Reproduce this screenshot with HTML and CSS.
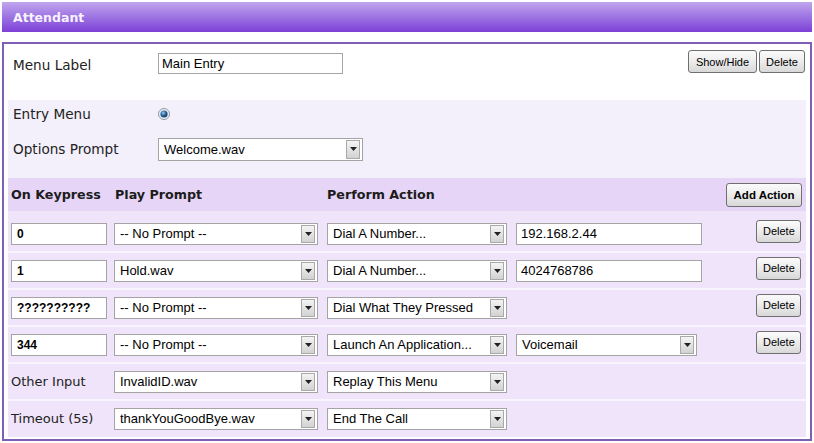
FILE: index.html
```html
<!DOCTYPE html>
<html>
<head>
<meta charset="utf-8">
<title>Attendant</title>
<link rel="stylesheet" href="styles.css">
</head>
<body>
<div class="panel-title">Attendant</div>
<div class="panel">
  <div class="label-row">
    <span class="field-label">Menu Label</span>
    <input class="text w-main" type="text" value="Main Entry">
    <div class="actions">
      <button class="btn btn-show">Show/Hide</button>
      <button class="btn btn-del">Delete</button>
    </div>
  </div>

  <div class="settings">
    <div class="setting entry">
      <span class="field-label">Entry Menu</span>
      <svg class="radio" width="12" height="12" viewBox="0 0 12 12">
        <defs>
          <radialGradient id="dot" cx="0.4" cy="0.35" r="0.7">
            <stop offset="0" stop-color="#9fd0f2"/>
            <stop offset="0.45" stop-color="#2f6ea5"/>
            <stop offset="1" stop-color="#0d2f55"/>
          </radialGradient>
        </defs>
        <circle cx="6" cy="6" r="5.5" fill="#eef1f4" stroke="#8d9aa7"/>
        <circle cx="6" cy="6" r="3.6" fill="url(#dot)"/>
      </svg>
    </div>
    <div class="setting prompt">
      <span class="field-label">Options Prompt</span>
      <span class="sel w-opt tall"><select><option>Welcome.wav</option></select><span class="arrow"><svg width="7" height="4" viewBox="0 0 7 4"><path d="M0 0H7L3.5 4Z" fill="#222"/></svg></span></span>
    </div>
  </div>

  <div class="keys">
    <div class="krow head">
      <span class="col-head">On Keypress</span>
      <span class="col-head">Play Prompt</span>
      <span class="col-head">Perform Action</span>
      <span></span>
      <button class="btn btn-add">Add Action</button>
    </div>

    <div class="krow first">
      <input class="text key w-key" type="text" value="0">
      <span class="sel w-prompt"><select><option>-- No Prompt --</option></select><span class="arrow"><svg width="7" height="4" viewBox="0 0 7 4"><path d="M0 0H7L3.5 4Z" fill="#222"/></svg></span></span>
      <span class="sel w-action"><select><option>Dial A Number...</option></select><span class="arrow"><svg width="7" height="4" viewBox="0 0 7 4"><path d="M0 0H7L3.5 4Z" fill="#222"/></svg></span></span>
      <input class="text w-value" type="text" value="192.168.2.44">
      <button class="btn btn-row">Delete</button>
    </div>

    <div class="krow">
      <input class="text key w-key" type="text" value="1">
      <span class="sel w-prompt"><select><option>Hold.wav</option></select><span class="arrow"><svg width="7" height="4" viewBox="0 0 7 4"><path d="M0 0H7L3.5 4Z" fill="#222"/></svg></span></span>
      <span class="sel w-action"><select><option>Dial A Number...</option></select><span class="arrow"><svg width="7" height="4" viewBox="0 0 7 4"><path d="M0 0H7L3.5 4Z" fill="#222"/></svg></span></span>
      <input class="text w-value" type="text" value="4024768786">
      <button class="btn btn-row">Delete</button>
    </div>

    <div class="krow">
      <input class="text key w-key" type="text" value="??????????">
      <span class="sel w-prompt"><select><option>-- No Prompt --</option></select><span class="arrow"><svg width="7" height="4" viewBox="0 0 7 4"><path d="M0 0H7L3.5 4Z" fill="#222"/></svg></span></span>
      <span class="sel w-action"><select><option>Dial What They Pressed</option></select><span class="arrow"><svg width="7" height="4" viewBox="0 0 7 4"><path d="M0 0H7L3.5 4Z" fill="#222"/></svg></span></span>
      <span></span>
      <button class="btn btn-row">Delete</button>
    </div>

    <div class="krow">
      <input class="text key w-key" type="text" value="344">
      <span class="sel w-prompt"><select><option>-- No Prompt --</option></select><span class="arrow"><svg width="7" height="4" viewBox="0 0 7 4"><path d="M0 0H7L3.5 4Z" fill="#222"/></svg></span></span>
      <span class="sel w-action"><select><option>Launch An Application...</option></select><span class="arrow"><svg width="7" height="4" viewBox="0 0 7 4"><path d="M0 0H7L3.5 4Z" fill="#222"/></svg></span></span>
      <span class="sel w-app"><select><option>Voicemail</option></select><span class="arrow"><svg width="7" height="4" viewBox="0 0 7 4"><path d="M0 0H7L3.5 4Z" fill="#222"/></svg></span></span>
      <button class="btn btn-row">Delete</button>
    </div>

    <div class="krow">
      <span class="row-label">Other Input</span>
      <span class="sel w-prompt"><select><option>InvalidID.wav</option></select><span class="arrow"><svg width="7" height="4" viewBox="0 0 7 4"><path d="M0 0H7L3.5 4Z" fill="#222"/></svg></span></span>
      <span class="sel w-action"><select><option>Replay This Menu</option></select><span class="arrow"><svg width="7" height="4" viewBox="0 0 7 4"><path d="M0 0H7L3.5 4Z" fill="#222"/></svg></span></span>
    </div>

    <div class="krow">
      <span class="row-label">Timeout (5s)</span>
      <span class="sel w-prompt"><select><option>thankYouGoodBye.wav</option></select><span class="arrow"><svg width="7" height="4" viewBox="0 0 7 4"><path d="M0 0H7L3.5 4Z" fill="#222"/></svg></span></span>
      <span class="sel w-action"><select><option>End The Call</option></select><span class="arrow"><svg width="7" height="4" viewBox="0 0 7 4"><path d="M0 0H7L3.5 4Z" fill="#222"/></svg></span></span>
    </div>
  </div>
</div>
</body>
</html>
```

FILE: styles.css
```css
* { box-sizing: border-box; }

body {
  margin: 2px;
  background: #fff;
  font-family: "DejaVu Sans", Verdana, sans-serif;
  color: #222;
}

.panel-title {
  height: 30px;
  padding-left: 11px;
  display: flex;
  align-items: center;
  font-weight: bold;
  font-size: 12.5px;
  color: #f7f2ff;
  background: linear-gradient(#c1a6ee 0%, #a078e3 45%, #7d40d7 100%);
}

.panel {
  margin-top: 10px;
  border: 2px solid #7f5fb5;
  padding: 0 4px 2px 4px;
}

.field-label {
  font-size: 13.6px;
  line-height: 18px;
  color: #222;
}
.row-label {
  font-size: 13px;
  line-height: 18px;
  color: #222;
}

/* Menu label row */
.label-row {
  height: 56px;
  display: flex;
  align-items: flex-start;
  padding: 6px 1px 0 5px;
}
.label-row .field-label {
  width: 145px;
  margin-top: 6px;
}
.label-row .text {
  margin-top: 3px;
  height: 21px;
  padding: 0 3px;
}
.actions {
  margin-left: auto;
  display: flex;
  gap: 2px;
}

/* inputs */
.text {
  height: 22px;
  border: 1px solid #a4a4a4;
  background: #fff;
  font-family: "Liberation Sans", Arial, sans-serif;
  font-size: 13px;
  color: #000;
  padding: 0 4px;
  margin: 0;
  outline: none;
}
.text.key {
  font-weight: bold;
  font-size: 12px;
  padding-left: 5px;
}

.w-main { width: 185px; }
.w-key { width: 96px; }
.w-prompt { width: 204px; }
.w-action { width: 180px; }
.w-value { width: 186px; }
.w-app { width: 181px; }
.w-opt { width: 205px; }

/* selects */
.sel {
  position: relative;
  display: inline-block;
  height: 22px;
}
.sel.tall { height: 23px; }
.sel select {
  -webkit-appearance: none;
  appearance: none;
  width: 100%;
  height: 100%;
  margin: 0;
  border: 1px solid #a4a4a4;
  border-radius: 0;
  background: #fff;
  font-family: "Liberation Sans", Arial, sans-serif;
  font-size: 13px;
  color: #000;
  padding: 0 20px 0 5px;
  outline: none;
}
.sel .arrow {
  position: absolute;
  right: 3px;
  top: 2px;
  width: 14px;
  height: 18px;
  border: 1px solid #a9a9a9;
  background: linear-gradient(#f4f4f4, #d2d2d2);
  display: flex;
  align-items: center;
  justify-content: center;
  pointer-events: none;
}
.sel.tall .arrow { top: 2px; height: 19px; }

/* buttons */
.btn {
  height: 23px;
  margin: 0;
  padding: 0 6px;
  border: 1px solid #6f6f6f;
  border-radius: 3px;
  background: linear-gradient(#fbfbfb 0%, #ececec 50%, #d8d8d8 100%);
  font-family: "Liberation Sans", Arial, sans-serif;
  font-size: 11px;
  color: #000;
}
.btn-show { width: 69px; }
.btn-del { width: 46px; }
.btn-row { width: 45px; margin-bottom: 5px; }
.btn-add {
  width: 76px;
  height: 24px;
  font-weight: bold;
  font-size: 11.5px;
  padding: 0;
}

/* settings block */
.settings {
  background: #f3effb;
  padding: 0 0 8px 5px;
}
.setting {
  display: grid;
  grid-template-columns: 145px auto;
  align-items: center;
  justify-content: start;
}
.setting.entry { height: 28px; }
.setting.prompt { height: 42px; }
.radio { display: block; }

/* keypress table */
.keys {
  background: #efe4f9;
  padding-bottom: 1px;
}
.krow {
  display: grid;
  grid-template-columns: 103px 213px 189px 1fr auto;
  align-items: center;
  height: 37px;
  padding: 0 5px 0 3px;
  border-top: 2px solid #f8f4fd;
}
.krow.head {
  height: 33px;
  border-top: 0;
  background: #e7d5f7;
  padding-right: 4px;
}
.krow.first {
  height: 40px;
  padding-top: 5px;
  border-top: 0;
}
.col-head {
  font-weight: bold;
  font-size: 12.7px;
  color: #1c1c1c;
}
.col-head:nth-child(2) { padding-left: 1px; }
```
